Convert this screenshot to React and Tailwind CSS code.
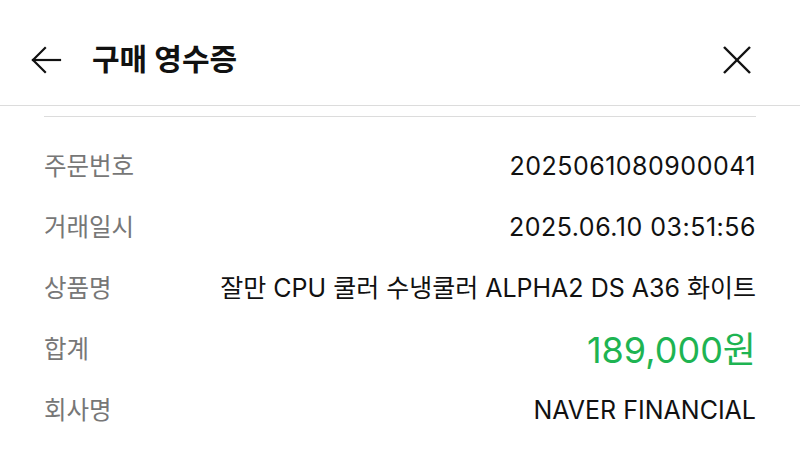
import React from 'react';

const rows = [
    { label: '주문번호', value: '2025061080900041', num: true },
    { label: '거래일시', value: '2025.06.10 03:51:56', num: true },
    { label: '상품명', value: '잘만 CPU 쿨러 수냉쿨러 ALPHA2 DS A36 화이트' },
    { label: '합계', value: '189,000원', amount: true },
    { label: '회사명', value: 'NAVER FINANCIAL' },
];

const App = () => {
    return (
        <div
            className="w-[800px] h-[452px] bg-white overflow-hidden"
            style={{ fontFamily: 'Inter, "Noto Sans CJK KR", sans-serif' }}
        >
            <div className="h-[106px] flex items-center justify-between pt-[14px] pl-[30px] pr-[48px] border-b border-[#dcdcdc]">
                <div className="flex items-center">
                    <svg width="32" height="32" viewBox="0 0 32 32" fill="none" stroke="#111" strokeWidth="2.2" strokeLinecap="square">
                        <path d="M30 16H3" />
                        <path d="M15 4L3 16l12 12" />
                    </svg>
                    <h1 className="ml-[30px] text-[30px] font-bold text-[#111]">구매 영수증</h1>
                </div>
                <svg width="30" height="30" viewBox="0 0 30 30" fill="none" stroke="#111" strokeWidth="2.4">
                    <path d="M2 2l26 26" />
                    <path d="M28 2L2 28" />
                </svg>
            </div>

            <div className="px-[44px] pt-[10px]">
                <div className="border-t border-[#dcdcdc] pt-[19px]">
                    {rows.map((row) => (
                        <div key={row.label} className="h-[61px] flex items-center justify-between">
                            <span className="text-[24.5px] text-[#777]">{row.label}</span>
                            {row.amount ? (
                                <span className="text-[36px] text-[#1eb452]">{row.value}</span>
                            ) : row.num ? (
                                <span className="text-[25px] text-[#111] tracking-[0.5px]">{row.value}</span>
                            ) : (
                                <span className="text-[25px] text-[#111]">{row.value}</span>
                            )}
                        </div>
                    ))}
                </div>
            </div>
        </div>
    );
};

export default App;
